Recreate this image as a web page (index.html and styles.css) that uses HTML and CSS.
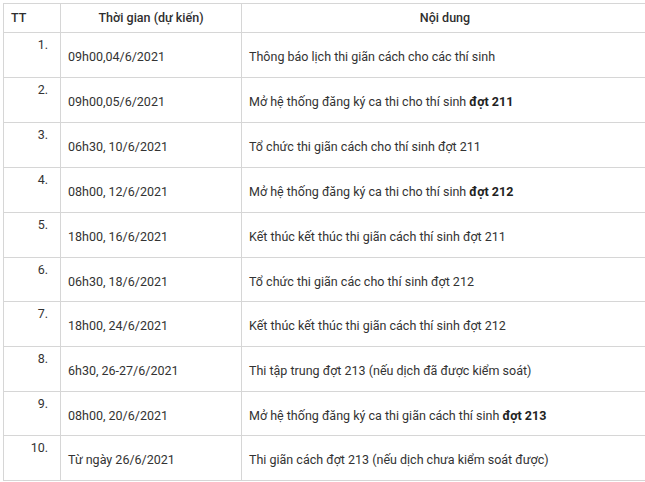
FILE: index.html
```html
<!DOCTYPE html>
<html lang="vi">
<head>
<meta charset="utf-8">
<link rel="stylesheet" href="styles.css">
</head>
<body>
<div class="wrap">
<table class="sched">
  <colgroup><col class="c1"><col class="c2"><col class="c3"></colgroup>
  <thead>
    <tr><th class="tt">TT</th><th>Thời gian (dự kiến)</th><th>Nội dung</th></tr>
  </thead>
  <tbody>
    <tr class="r45"><td class="num">1.</td><td>09h00,04/6/2021</td><td>Thông báo lịch thi giãn cách cho các thí sinh</td></tr>
    <tr class="r45"><td class="num">2.</td><td>09h00,05/6/2021</td><td>Mở hệ thống đăng ký ca thi cho thí sinh <b>đợt 211</b></td></tr>
    <tr class="r45"><td class="num">3.</td><td>06h30, 10/6/2021</td><td>Tổ chức thi giãn cách cho thí sinh đợt 211</td></tr>
    <tr class="r45"><td class="num">4.</td><td>08h00, 12/6/2021</td><td>Mở hệ thống đăng ký ca thi cho thí sinh <b>đợt 212</b></td></tr>
    <tr class="r45"><td class="num">5.</td><td>18h00, 16/6/2021</td><td>Kết thúc kết thúc thi giãn cách thí sinh đợt 211</td></tr>
    <tr class="r44"><td class="num">6.</td><td>06h30, 18/6/2021</td><td>Tổ chức thi giãn các cho thí sinh đợt 212</td></tr>
    <tr class="r45"><td class="num">7.</td><td>18h00, 24/6/2021</td><td>Kết thúc kết thúc thi giãn cách thí sinh đợt 212</td></tr>
    <tr class="r45"><td class="num">8.</td><td>6h30, 26-27/6/2021</td><td>Thi tập trung đợt 213 (nếu dịch đã được kiểm soát)</td></tr>
    <tr class="r44"><td class="num">9.</td><td>08h00, 20/6/2021</td><td>Mở hệ thống đăng ký ca thi giãn cách thí sinh <b>đợt 213</b></td></tr>
    <tr class="r45"><td class="num">10.</td><td>Từ ngày 26/6/2021</td><td>Thi giãn cách đợt 213 (nếu dịch chưa kiểm soát được)</td></tr>
  </tbody>
</table>
</div>
</body>
</html>
```

FILE: styles.css
```css
html, body {
  margin: 0;
  padding: 0;
  background: #ffffff;
  overflow: hidden;
}
.wrap {
  padding: 3px 0 0 3px;
  width: 648px;
}
.sched {
  border-collapse: collapse;
  table-layout: fixed;
  width: 645px;
  font-family: Roboto, "Liberation Sans", Arial, sans-serif;
  font-size: 12.5px;
  color: #333333;
}
.c1 { width: 57px; }
.c2 { width: 181px; }
.c3 { width: 407px; }
.sched th, .sched td {
  border: 1px solid #d6d6d6;
  padding: 0 7px;
  line-height: 16px;
}
.sched th {
  height: 28px;
  font-weight: 500;
  text-align: center;
  color: #2f2f2f;
  vertical-align: middle;
}
.sched th.tt {
  text-align: left;
  padding-left: 7px;
}
.sched td {
  vertical-align: middle;
  padding-top: 4px;
}
.sched td.num {
  text-align: right;
  vertical-align: top;
  padding: 4px 12px 0 0;
}
.r45 td { height: 40px; }
.r44 td { height: 39px; }
.sched b { font-weight: 700; color: #222; }
```
